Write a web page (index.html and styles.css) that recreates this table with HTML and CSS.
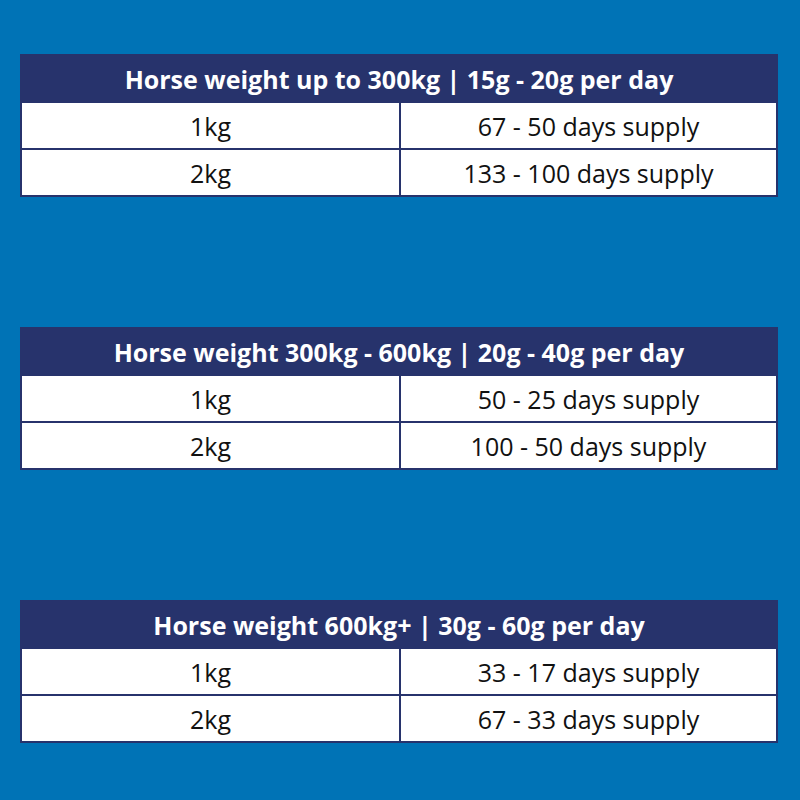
FILE: index.html
```html
<!DOCTYPE html>
<html>
<head>
<meta charset="utf-8">
<link rel="stylesheet" href="styles.css">
</head>
<body>
<main class="page">
  <section class="table">
    <div class="head">Horse weight up to 300kg | 15g - 20g per day</div>
    <div class="row"><div class="cell">1kg</div><div class="cell">67 - 50 days supply</div></div>
    <div class="row"><div class="cell">2kg</div><div class="cell">133 - 100 days supply</div></div>
  </section>
  <section class="table">
    <div class="head">Horse weight 300kg - 600kg | 20g - 40g per day</div>
    <div class="row"><div class="cell">1kg</div><div class="cell">50 - 25 days supply</div></div>
    <div class="row"><div class="cell">2kg</div><div class="cell">100 - 50 days supply</div></div>
  </section>
  <section class="table">
    <div class="head">Horse weight 600kg+ | 30g - 60g per day</div>
    <div class="row"><div class="cell">1kg</div><div class="cell">33 - 17 days supply</div></div>
    <div class="row"><div class="cell">2kg</div><div class="cell">67 - 33 days supply</div></div>
  </section>
</main>
</body>
</html>
```
FILE: styles.css
```css
html, body {
  margin: 0;
  padding: 0;
  background: #0073b6;
}
body {
  font-family: "Open Sans", "Noto Sans", sans-serif;
  width: 800px;
  height: 800px;
}
.page {
  display: flex;
  flex-direction: column;
  gap: 130px;
  padding: 54px 22px 0 20px;
}
.table {
  border: 2px solid #27336c;
  background: #ffffff;
}
.head {
  height: 45px;
  background: #27336c;
  color: #ffffff;
  font-weight: 700;
  font-size: 25px;
  display: flex;
  align-items: center;
  justify-content: center;
}
.row {
  display: grid;
  grid-template-columns: 1fr 1fr;
  border-top: 2px solid #27336c;
}
.cell {
  height: 45px;
  display: flex;
  align-items: center;
  justify-content: center;
  font-size: 25px;
  color: #111111;
}
.cell + .cell {
  border-left: 2px solid #27336c;
}
```
